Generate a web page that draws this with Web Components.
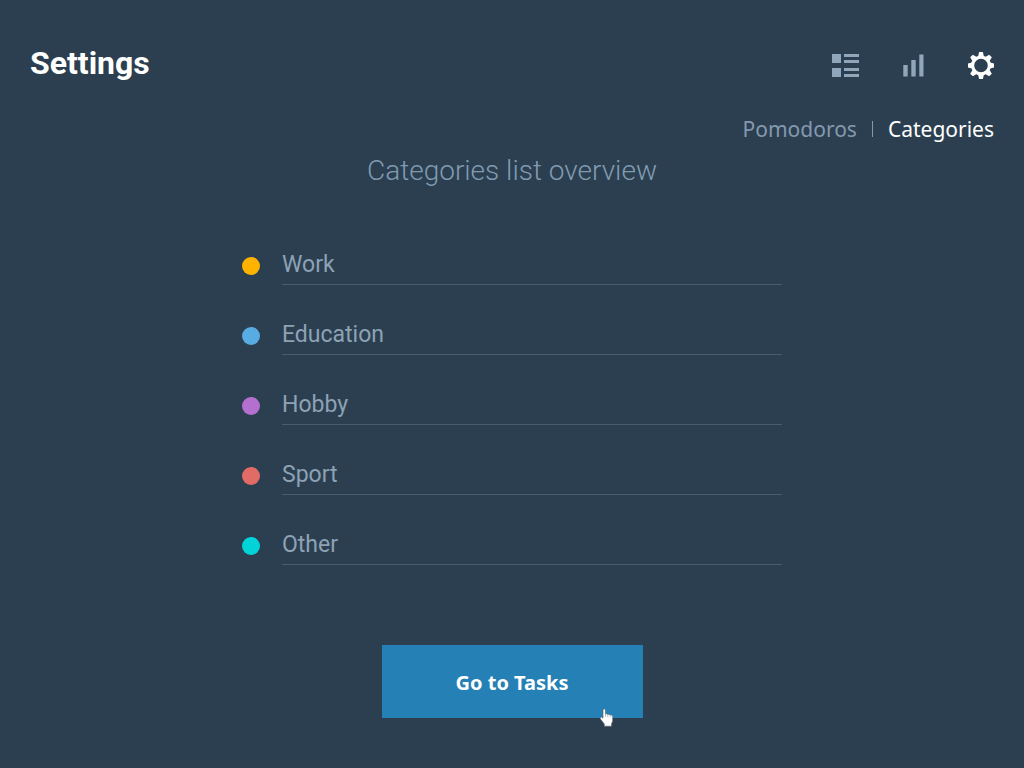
<!DOCTYPE html>
<html lang="en">
<head>
<meta charset="utf-8">
<meta name="viewport" content="width=device-width, initial-scale=1">
<title>Settings</title>
<style>
  html, body { margin: 0; min-height: 100%; background: #2b3f50; }
  body { font-family: Roboto, "Liberation Sans", sans-serif; color: #8da2b5; }
</style>
</head>
<body>
<settings-page>
  <app-header slot="header" heading="Settings"></app-header>
  <section-tabs slot="tabs"></section-tabs>
  <category-list heading="Categories list overview">
    <category-item color="#ffb200">Work</category-item>
    <category-item color="#59abe3">Education</category-item>
    <category-item color="#b370cf">Hobby</category-item>
    <category-item color="#e16c65">Sport</category-item>
    <category-item color="#00d4d9">Other</category-item>
  </category-list>
  <action-button slot="action">Go to Tasks</action-button>
</settings-page>

<script>
  const define = (name, markup, setup) => {
    const template = document.createElement('template');
    template.innerHTML = markup;
    customElements.define(name, class extends HTMLElement {
      constructor() {
        super();
        this.attachShadow({ mode: 'open' }).append(template.content.cloneNode(true));
      }
      connectedCallback() {
        if (setup) setup(this, this.shadowRoot);
      }
    });
  };

  define('settings-page', `
    <style>
      :host { display: flex; flex-direction: column; box-sizing: border-box; min-height: 100vh; padding: 43px 30px 50px; }
      main { display: flex; flex-direction: column; align-items: center; gap: 80px; margin-top: 6px; }
    </style>
    <slot name="header"></slot>
    <slot name="tabs"></slot>
    <main>
      <slot></slot>
      <slot name="action"></slot>
    </main>`);

  define('app-header', `
    <style>
      :host { display: block; }
      header { display: flex; justify-content: space-between; align-items: center; }
      h1 { margin: 0; font-size: 32px; line-height: 40px; font-weight: 700; color: #fff; }
      nav { display: flex; align-items: center; gap: 40px; padding-top: 6px; }
      a { display: flex; color: #90a6bb; }
      a[aria-current] { color: #fff; }
      svg { display: block; fill: currentColor; }
    </style>
    <header>
      <h1></h1>
      <nav aria-label="Main">
        <a href="#tasks" aria-label="Tasks">
          <svg width="28" height="28" viewBox="0 0 28 28" shape-rendering="crispEdges">
            <path d="M0 2h9v9H0zM0 16h9v9H0zM12 2h15v3H12zM12 8h15v3H12zM12 16h15v3H12zM12 22h15v3H12z"/>
          </svg>
        </a>
        <a href="#reports" aria-label="Reports">
          <svg width="28" height="28" viewBox="0 0 28 28">
            <path d="M3.3 13h4.4v11.5H3.3zM11.3 8h4.4v16.5h-4.4zM19.3 2.5h4.2v22h-4.2z"/>
          </svg>
        </a>
        <a href="#settings" aria-label="Settings" aria-current="page">
          <svg width="26" height="28" viewBox="0 0 26 28">
            <g transform="translate(13 13.5)">
              <circle r="8.4" fill="none" stroke="currentColor" stroke-width="3.2"/>
              <path id="tooth" d="M-2.9-9L-1.9-13.4H1.9L2.9-9z"/>
              <use href="#tooth" transform="rotate(45)"/>
              <use href="#tooth" transform="rotate(90)"/>
              <use href="#tooth" transform="rotate(135)"/>
              <use href="#tooth" transform="rotate(180)"/>
              <use href="#tooth" transform="rotate(225)"/>
              <use href="#tooth" transform="rotate(270)"/>
              <use href="#tooth" transform="rotate(315)"/>
            </g>
          </svg>
        </a>
      </nav>
    </header>`,
    (host, root) => { root.querySelector('h1').textContent = host.getAttribute('heading'); });

  define('section-tabs', `
    <style>
      :host { display: block; margin-top: 30px; }
      nav { display: flex; justify-content: flex-end; align-items: center; font: 21px/32px "Noto Sans", "Open Sans", sans-serif; }
      a { color: #8499af; text-decoration: none; }
      a[aria-current] { color: #fff; }
      i { width: 1px; height: 16px; margin: 0 15px; background: #8499af; }
    </style>
    <nav aria-label="Settings sections">
      <a href="#pomodoros">Pomodoros</a><i></i><a href="#categories" aria-current="page">Categories</a>
    </nav>`);

  define('category-list', `
    <style>
      :host { display: block; width: 100%; max-width: 540px; }
      h2 { margin: 0 0 24px; text-align: center; font-size: 28px; line-height: 40px; font-weight: 300; color: #809bb0; }
      div { display: flex; flex-direction: column; }
    </style>
    <h2></h2>
    <div role="list"><slot></slot></div>`,
    (host, root) => { root.querySelector('h2').textContent = host.getAttribute('heading'); });

  define('category-item', `
    <style>
      :host { display: flex; align-items: flex-end; gap: 22px; height: 70px; }
      i { flex: none; width: 18px; height: 18px; margin-bottom: 10px; border-radius: 50%; background: var(--dot); }
      span { flex: 1; padding-bottom: 5px; border-bottom: 1px solid #485c6e; font-size: 23px; line-height: 28px; }
    </style>
    <i></i><span><slot></slot></span>`,
    host => {
      host.setAttribute('role', 'listitem');
      host.style.setProperty('--dot', host.getAttribute('color'));
    });

  define('action-button', `
    <style>
      :host { display: block; position: relative; }
      button { display: block; min-width: 261px; padding: 22px 32px 19px; border: 0; background: #2480b5; color: #fff;
        font: 700 20px/32px "Noto Sans", "Open Sans", sans-serif; cursor: pointer; }
      svg { position: absolute; right: 28px; bottom: -10px; pointer-events: none; }
    </style>
    <button type="button"><slot></slot></button>
    <svg width="16" height="20" viewBox="0 0 16 20" aria-hidden="true">
      <path d="M4 1.5q1.3-1.2 2.5 0V6q1.2-.7 2.3.5 1.3-.7 2.4.6 1.7-.5 2.5 1V13l-1.2 3v2.2H5.3V16L1.3 10.8Q.8 9 2.3 9L4 10.2z" fill="#fff" stroke="#59636c" stroke-width=".6"/>
      <path d="M6.5 6v3M8.8 6.8V9M11.2 7.4V9.3" stroke="#8b949b" stroke-width=".6"/>
    </svg>`);
</script>
</body>
</html>
